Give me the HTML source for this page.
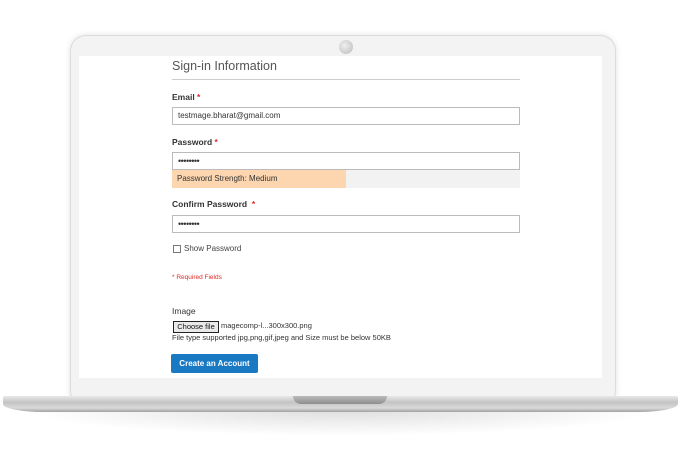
<!DOCTYPE html>
<html><head><style>
body{margin:0;width:680px;height:450px;background:#fff;position:relative;overflow:hidden;font-family:"Liberation Sans",sans-serif;}
.abs{position:absolute}
.frame{left:70px;top:35px;width:544px;height:370px;border-radius:16px;background:#f3f3f3;border:1px solid #dcdcdc;box-shadow:0 0 6px rgba(0,0,0,.12);}
.screen{left:79px;top:56px;width:523px;height:322px;background:#fff;}
.cam{left:339px;top:40px;width:14px;height:14px;border-radius:50%;background:radial-gradient(circle at 40% 40%,#eee,#bbb);}
.base{left:3px;top:396px;width:675px;height:16px;background:linear-gradient(#e8e8e8,#c4c4c4 40%,#dadada 75%,#a0a0a0);border-radius:2px 2px 40px 40px/2px 2px 8px 8px;}
.shadow{left:20px;top:410px;width:640px;height:26px;background:radial-gradient(ellipse at center top,rgba(0,0,0,.13),rgba(0,0,0,0) 70%);}
.notch{left:293px;top:396px;width:94px;height:8px;background:linear-gradient(#bbb,#8e8e8e);border-radius:0 0 8px 8px;}
.lbl{font-size:8.5px;color:#333;font-weight:bold;}
.lbl span{color:#e02b27;}
.inp{left:172px;width:346px;height:16px;border:1px solid #bbb;background:#fff;font-size:8px;color:#333;line-height:16px;padding-left:5px;box-sizing:content-box;}
.dots{font-size:9px;letter-spacing:-0.5px}
</style></head><body>
<div class="abs shadow"></div>
<div class="abs frame"></div>
<div class="abs cam"></div>
<div class="abs screen"></div>
<div class="abs base"></div>
<div class="abs notch"></div>

<div class="abs" style="left:172px;top:59px;font-size:12.5px;color:#555;">Sign-in Information</div>
<div class="abs" style="left:172px;top:79px;width:348px;height:1px;background:#ccc"></div>

<div class="abs lbl" style="left:172px;top:92px">Email <span>*</span></div>
<div class="abs inp" style="top:107px;width:341px">testmage.bharat@gmail.com</div>

<div class="abs lbl" style="left:172px;top:137px">Password <span>*</span></div>
<div class="abs inp dots" style="top:152px;width:341px">••••••••</div>
<div class="abs" style="left:172px;top:170px;width:348px;height:18px;background:#f2f2f2"></div>
<div class="abs" style="left:172px;top:170px;width:174px;height:18px;background:#fdd6b0;font-size:8px;color:#333;line-height:18px;padding-left:5px;box-sizing:border-box">Password Strength: Medium</div>

<div class="abs lbl" style="left:172px;top:199px">Confirm Password &nbsp;<span>*</span></div>
<div class="abs inp dots" style="top:215px;width:341px">••••••••</div>

<div class="abs" style="left:173px;top:245px;width:6px;height:6px;border:1px solid #777"></div>
<div class="abs" style="left:184px;top:244px;font-size:8px;color:#444">Show Password</div>

<div class="abs" style="left:172px;top:274px;font-size:6.5px;color:#e02b27">* Required Fields</div>

<div class="abs lbl" style="left:172px;top:306px;font-weight:normal;color:#333">Image</div>
<div class="abs" style="left:173px;top:321px;width:44px;height:10px;border:1px solid #222;background:#e9e9e9;font-size:7.5px;line-height:10px;text-align:center;color:#111">Choose file</div>
<div class="abs" style="left:221px;top:321px;font-size:7.5px;color:#333">magecomp-l...300x300.png</div>
<div class="abs" style="left:172px;top:333px;font-size:7.5px;color:#333">File type supported jpg,png,gif,jpeg and Size must be below 50KB</div>

<div class="abs" style="left:171px;top:354px;width:87px;height:19px;background:#1979c3;border-radius:2px;color:#fff;font-size:8px;font-weight:bold;text-align:center;line-height:19px">Create an Account</div>
</body></html>
